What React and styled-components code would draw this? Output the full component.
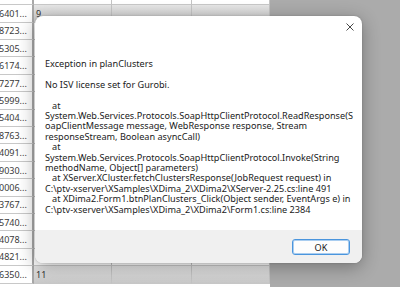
import styled, { createGlobalStyle } from "styled-components";

const GlobalStyle = createGlobalStyle`
  html, body {
    margin: 0;
    padding: 0;
    overflow: hidden;
    background: #ababab;
  }
`;

const Screen = styled.div`
  position: relative;
  display: flex;
  width: 400px;
  height: 287px;
  overflow: hidden;
  font-family: "Noto Sans", "Liberation Sans", sans-serif;
`;

const Grid = styled.div`
  display: flex;
  flex-direction: column;
  width: 270px;
  background: #fff;
`;

const Row = styled.div`
  display: grid;
  grid-template-columns: 34px 78px 80px 78px;
  height: ${(p) => p.$height}px;
  flex: none;
`;

const Cell = styled.div`
  display: flex;
  align-items: center;
  overflow: hidden;
  white-space: nowrap;
  font-size: 9px;
  color: #333;
  padding-left: 2px;
  border-right: 1px solid #c4c4c4;
  border-bottom: 1px solid #c8c8c8;
  background: ${(p) =>
    p.$selected ? "linear-gradient(#e6e6e6, #c9c9c9)" : "#fff"};
`;

const KeyCell = styled(Cell)`
  padding-left: 0;
  margin-left: -1px;
  border-right: 2px solid #a8a8a8;
  color: #3a3a3a;
`;

const Workspace = styled.div`
  flex: 1;
  background: #ababab;
`;

const Dialog = styled.div`
  position: absolute;
  left: 35px;
  top: 16px;
  width: 327px;
  height: 247px;
  display: flex;
  flex-direction: column;
  background: #fff;
  border-radius: 8px;
  box-shadow: 0 4px 18px rgba(0, 0, 0, 0.32), 0 0 2px rgba(0, 0, 0, 0.2);
  overflow: hidden;
`;

const Body = styled.div`
  position: relative;
  flex: 1;
  padding: 43px 10px 0 10px;
`;

const Close = styled.div`
  position: absolute;
  top: 7px;
  right: 8px;
  width: 8px;
  height: 8px;
  display: flex;
`;

const Message = styled.div`
  white-space: pre;
  font-size: 9.15px;
  line-height: 10.4px;
  color: #1a1a1a;
`;

const Footer = styled.div`
  height: 33px;
  flex: none;
  display: flex;
  justify-content: flex-end;
  align-items: flex-start;
  padding: 9px 12px 0 0;
  box-sizing: border-box;
  background: #f0f0f0;
`;

const Button = styled.button`
  width: 58px;
  height: 16px;
  padding: 0;
  border: 1px solid #4a95dd;
  box-shadow: inset 0 0 0 1px #a9cdf0;
  border-radius: 3px;
  background: #fdfdfd;
  font-family: inherit;
  font-size: 9.15px;
  color: #1a1a1a;
`;

const keys = [
  "6401...", "8723...", "5305...", "6174...", "7277...", "5999...",
  "5404...", "8763...", "4091...", "9030...", "0006...", "3767...",
  "5740...", "4078...", "4821...", "6350...",
];

const values = { 0: "9", 15: "11" };

const message = [
  "Exception in planClusters",
  "",
  "No ISV license set for Gurobi.",
  "",
  "   at",
  "System.Web.Services.Protocols.SoapHttpClientProtocol.ReadResponse(S",
  "oapClientMessage message, WebResponse response, Stream",
  "responseStream, Boolean asyncCall)",
  "   at",
  "System.Web.Services.Protocols.SoapHttpClientProtocol.Invoke(String",
  "methodName, Object[] parameters)",
  "   at XServer.XCluster.fetchClustersResponse(JobRequest request) in",
  "C:\\ptv-xserver\\XSamples\\XDima_2\\XDima2\\XServer-2.25.cs:line 491",
  "   at XDima2.Form1.btnPlanClusters_Click(Object sender, EventArgs e) in",
  "C:\\ptv-xserver\\XSamples\\XDima_2\\XDima2\\Form1.cs:line 2384",
].join("\n");

export default function App() {
  return (
    <>
      <GlobalStyle />
      <Screen>
        <Grid>
          <Row $height={5.3}>
            <KeyCell />
            <Cell />
            <Cell />
            <Cell />
          </Row>
          {keys.map((key, i) => {
            const selected = i in values;
            return (
              <Row key={key} $height={17.4}>
                <KeyCell>{key}</KeyCell>
                <Cell $selected={selected}>{values[i]}</Cell>
                <Cell $selected={selected} />
                <Cell $selected={selected} />
              </Row>
            );
          })}
        </Grid>
        <Workspace />
        <Dialog>
          <Body>
            <Close>
              <svg width="8" height="8" viewBox="0 0 8 8">
                <path d="M0.5 0.5 L7.5 7.5 M7.5 0.5 L0.5 7.5" stroke="#333" strokeWidth="0.9" />
              </svg>
            </Close>
            <Message>{message}</Message>
          </Body>
          <Footer>
            <Button>OK</Button>
          </Footer>
        </Dialog>
      </Screen>
    </>
  );
}
